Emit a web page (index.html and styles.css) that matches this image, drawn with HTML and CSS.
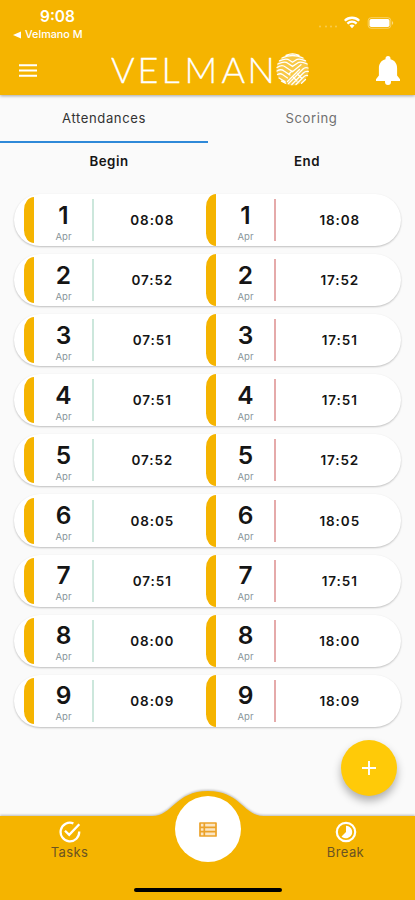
FILE: index.html
```html
<!DOCTYPE html>
<html lang="en">
<head>
  <meta charset="UTF-8" />
  <title>Velmano</title>
  <link rel="stylesheet" href="styles.css">
</head>
<body>

  <header class="header">
    <div class="status">
      <div class="status-left">
        <div class="clock">9:08</div>
        <div class="back"><svg width="8" height="8" viewBox="0 0 8 8"><path d="M0 4 8 0.5v7z" fill="#fff"/></svg><span>Velmano M</span></div>
      </div>
      <svg class="status-icons" width="78" height="16" viewBox="0 0 78 16">
        <g fill="#fff" opacity=".3"><circle cx="3" cy="11.5" r="1"/><circle cx="9" cy="11.5" r="1"/><circle cx="14" cy="11.5" r="1"/><circle cx="19" cy="11.5" r="1"/></g>
        <g fill="none" stroke="#fff" stroke-width="2.3">
          <path d="M27.8 5.7a10.3 10.3 0 0 1 14.4 0"/>
          <path d="M30.4 8.6a6.5 6.5 0 0 1 9.2 0"/>
        </g>
        <path d="M32.5 10.6a3.6 3.6 0 0 1 5 0L35 13.3z" fill="#fff"/>
        <rect x="51.2" y="2.7" width="22.6" height="10.6" rx="3" fill="none" stroke="#fff" stroke-opacity=".4"/>
        <rect x="52.5" y="4" width="20" height="8" rx="1.8" fill="#fff"/>
        <path d="M75 6q2.4 2 0 4z" fill="#fff" opacity=".5"/>
      </svg>
    </div>
    <div class="appbar">
      <svg class="menu" width="18" height="13" viewBox="0 0 18 13"><path d="M0 1.3h18M0 6.5h18M0 11.7h18" stroke="#fff" stroke-width="2"/></svg>
      <svg class="logo" width="202" height="50" viewBox="0 -7 202 50">
        <text class="logo-text" y="31" x="0 26.5 50.5 73.5 110.5 136.5">VELMAN</text>
        <circle cx="181.5" cy="17.5" r="16" fill="#fff" opacity=".28"/>
        <g fill="none" stroke="#fff" stroke-width="1.3" stroke-linecap="round">
          <path d="M175 3.3q6.500-3 13 0M171 6q10.500-5 21 0M168.500 8.800q7-3 10-.5l3 2 3-2q3-2.500 10 .5M166.800 12q7-3.500 10-.8l4.700 3.200 4.700-3.200q3-2.700 10 .8"/>
          <path d="M166 15.500q5-3.500 8.500-.5l7 4.700 8.500-7M166 19q4-2.500 7 0l6 4M166.500 22.500q3-1.500 5 0l5 3.500M168 26l6 3.500M170.500 29.200l4 2"/>
          <path d="M197 16q-3-1-5 1l-14.500 14.500M197.300 19.500q-3-.5-5 1.500l-11.500 11.500M196.500 23.500q-2-.5-4 1.500l-7.500 7.500M194.500 27.500l-4 3.800M188.500 17.500l-12 12M186.500 22l4 4M182.500 25.500l3.500 3.500M178 22l3-3"/>
        </g>
      </svg>
      <svg class="bell" width="24" height="29" viewBox="0 0 24 29"><path d="M12 0a2.500 2.500 0 0 1 2.500 2.500v.7c4.200 1.100 6.600 4.300 6.600 9.100v7.200l2.900 3.800v1.700H0v-1.700l2.900-3.800v-7.200c0-4.800 2.400-8 6.600-9.100v-.7A2.500 2.500 0 0 1 12 0zM9 25h6v1a3 3 0 0 1-6 0z" fill="#fff"/></svg>
    </div>
  </header>

  <nav class="tabs">
    <div class="tab active">Attendances</div>
    <div class="tab">Scoring</div>
  </nav>

  <main class="content">
    <div class="titles"><span>Begin</span><span>End</span></div>
    <div class="list" id="list"></div>
  </main>

  <button class="fab"><svg width="14" height="14" viewBox="0 0 14 14"><path d="M7 0v14M0 7h14" stroke="#fff" stroke-width="1.9"/></svg></button>

  <footer class="bottom">
    <svg class="bottom-bg" width="415" height="115" viewBox="0 0 415 115"><path d="M0 31H152C173 31 175 6 208 6S243 31 264 31H415V115H0z" fill="#f5b400"/></svg>
    <div class="bottom-items">
      <div class="item tasks">
        <svg width="22" height="22" viewBox="0 0 22 22" fill="none" stroke="#fff" stroke-width="2.3"><path d="M14.4 2.4A9.3 9.3 0 1 0 20.2 10.5"/><path d="M6 9.700l4.200 4.100L20.300 3.200"/></svg>
        <span>Tasks</span>
      </div>
      <div class="center">
        <svg width="18" height="15" viewBox="0 0 18 15"><path d="M1 1h16v13H1z" fill="#fbe6c4"/><path d="M1 1h16v13H1zM1 5.300h16M1 9.700h16M5.300 1v13" fill="none" stroke="#eba22a" stroke-width="1.7" stroke-linejoin="round"/></svg>
      </div>
      <div class="item break">
        <svg width="22" height="22" viewBox="0 0 22 22"><circle cx="11" cy="11" r="9.200" fill="none" stroke="#fff" stroke-width="2.200"/><path d="M11 4.700a6.300 6.300 0 1 1-4.500 10.800L11 11z" fill="#fff"/></svg>
        <span>Break</span>
      </div>
    </div>
    <div class="home"></div>
  </footer>

  <script>
    const times = [
      ['08:08', '18:08'],
      ['07:52', '17:52'],
      ['07:51', '17:51'],
      ['07:51', '17:51'],
      ['07:52', '17:52'],
      ['08:05', '18:05'],
      ['07:51', '17:51'],
      ['08:00', '18:00'],
      ['08:09', '18:09']
    ];

    function half(day, time, type) {
      return `<div class="half ${type}">
        <div class="bar"></div>
        <div class="date"><div class="day">${day}</div><div class="month">Apr</div></div>
        <div class="line"></div>
        <div class="time">${time}</div>
      </div>`;
    }

    document.getElementById('list').innerHTML = times.map((t, i) =>
      `<div class="row">${half(i + 1, t[0], 'begin')}${half(i + 1, t[1], 'end')}</div>`
    ).join('');
  </script>

</body>
</html>
```

FILE: styles.css
```css
* {
  box-sizing: border-box;
}
body {
  margin: 0;
  width: 415px;
  height: 900px;
  display: flex;
  flex-direction: column;
  overflow: hidden;
  background: #fafafa;
  color: #151515;
  font-family: Inter, sans-serif;
}
.header {
  height: 95px;
  background: #f5b400;
  color: #fff;
  box-shadow: 0 1px 3px rgba(0, 0, 0, 0.35);
}
.status {
  height: 45px;
  padding: 7px 17px 0 13px;
  display: flex;
  justify-content: space-between;
}
.clock {
  padding-left: 27px;
  font-size: 15.5px;
  font-weight: 600;
  line-height: 19px;
}
.back {
  display: flex;
  align-items: center;
  gap: 4px;
  font-size: 10.8px;
  font-weight: 500;
  line-height: 18px;
}
.status-icons {
  margin-top: 8px;
  margin-right: 3px;
}
.appbar {
  height: 50px;
  padding: 0 15px 0 19px;
  display: flex;
}
.menu {
  margin-top: 19px;
}
.logo {
  margin-left: 74px;
}
.logo-text {
  font-family: Lato, sans-serif;
  font-size: 36px;
  font-weight: 300;
  fill: #fff;
  stroke: #fff;
  stroke-width: 0.3px;
}
.bell {
  margin: 11px 0 0 auto;
}
.tabs {
  height: 48px;
  display: flex;
}
.tab {
  width: 207px;
  padding-top: 14px;
  text-align: center;
  font-size: 13.1px;
  line-height: 18px;
  letter-spacing: 0.6px;
  color: #707070;
}
.tab.active {
  width: 208px;
  border-bottom: 2px solid #2f89d8;
  color: #333;
}
.content {
  flex: 1;
}
.titles {
  display: flex;
  padding: 9px 0 0 10px;
  font-size: 13.3px;
  font-weight: 600;
  line-height: 18px;
  letter-spacing: 0.5px;
  text-align: center;
}
.titles span {
  width: 198px;
}
.list {
  margin: 24px 14px 0;
  display: flex;
  flex-direction: column;
  gap: 8px;
}
.row {
  height: 52.1px;
  display: flex;
  border-radius: 26px;
  background: #fff;
  box-shadow: 0 1px 2px rgba(0, 0, 0, 0.24);
}
.half {
  display: flex;
  align-items: center;
}
.begin {
  width: 191.5px;
  padding-left: 9.5px;
}
.end {
  flex: 1;
}
.bar {
  width: 10.5px;
  height: 46px;
  background: #f5b400;
  border-radius: 11px 0 0 11px / 14px 0 0 14px;
}
.end .bar {
  height: 52px;
}
.date {
  width: 58px;
  padding: 5px 0 0 1px;
  text-align: center;
}
.day {
  font-size: 24.5px;
  font-weight: 600;
  line-height: 25px;
}
.month {
  margin-top: 3px;
  font-size: 9.5px;
  line-height: 12px;
  color: #87949a;
}
.line {
  width: 2px;
  height: 42px;
  background: #cce7dc;
}
.end .line {
  width: 1.5px;
  background: #e5aaaa;
}
.time {
  flex: 1;
  padding-left: 5px;
  text-align: center;
  font-size: 13.5px;
  font-weight: 600;
  letter-spacing: 0.9px;
}
.end .time {
  padding-left: 3px;
}
.fab {
  position: absolute;
  left: 341px;
  top: 740px;
  width: 56px;
  height: 56px;
  padding: 0;
  display: flex;
  align-items: center;
  justify-content: center;
  border: none;
  border-radius: 50%;
  background: #ffca08;
  box-shadow: 0 5px 8px rgba(0, 0, 0, 0.3);
}
.bottom {
  position: relative;
  height: 115px;
}
.bottom-bg {
  position: absolute;
  left: 0;
  top: 0;
  overflow: visible;
  filter: drop-shadow(0 -1px 1px rgba(0, 0, 0, 0.25));
}
.bottom-items {
  position: relative;
  display: flex;
  justify-content: center;
  height: 103px;
}
.item {
  width: 138px;
  padding-top: 36px;
  display: flex;
  flex-direction: column;
  align-items: center;
  font-size: 13px;
  line-height: 18px;
  letter-spacing: 0.4px;
  color: #6b5322;
}
.item svg {
  display: block;
}
.center {
  width: 66px;
  height: 66px;
  margin: 11px 36px 0;
  display: flex;
  align-items: center;
  justify-content: center;
  border-radius: 50%;
  background: #fff;
}
.home {
  position: relative;
  width: 148px;
  height: 4px;
  margin: 0 auto;
  border-radius: 2px;
  background: #000;
}
```
